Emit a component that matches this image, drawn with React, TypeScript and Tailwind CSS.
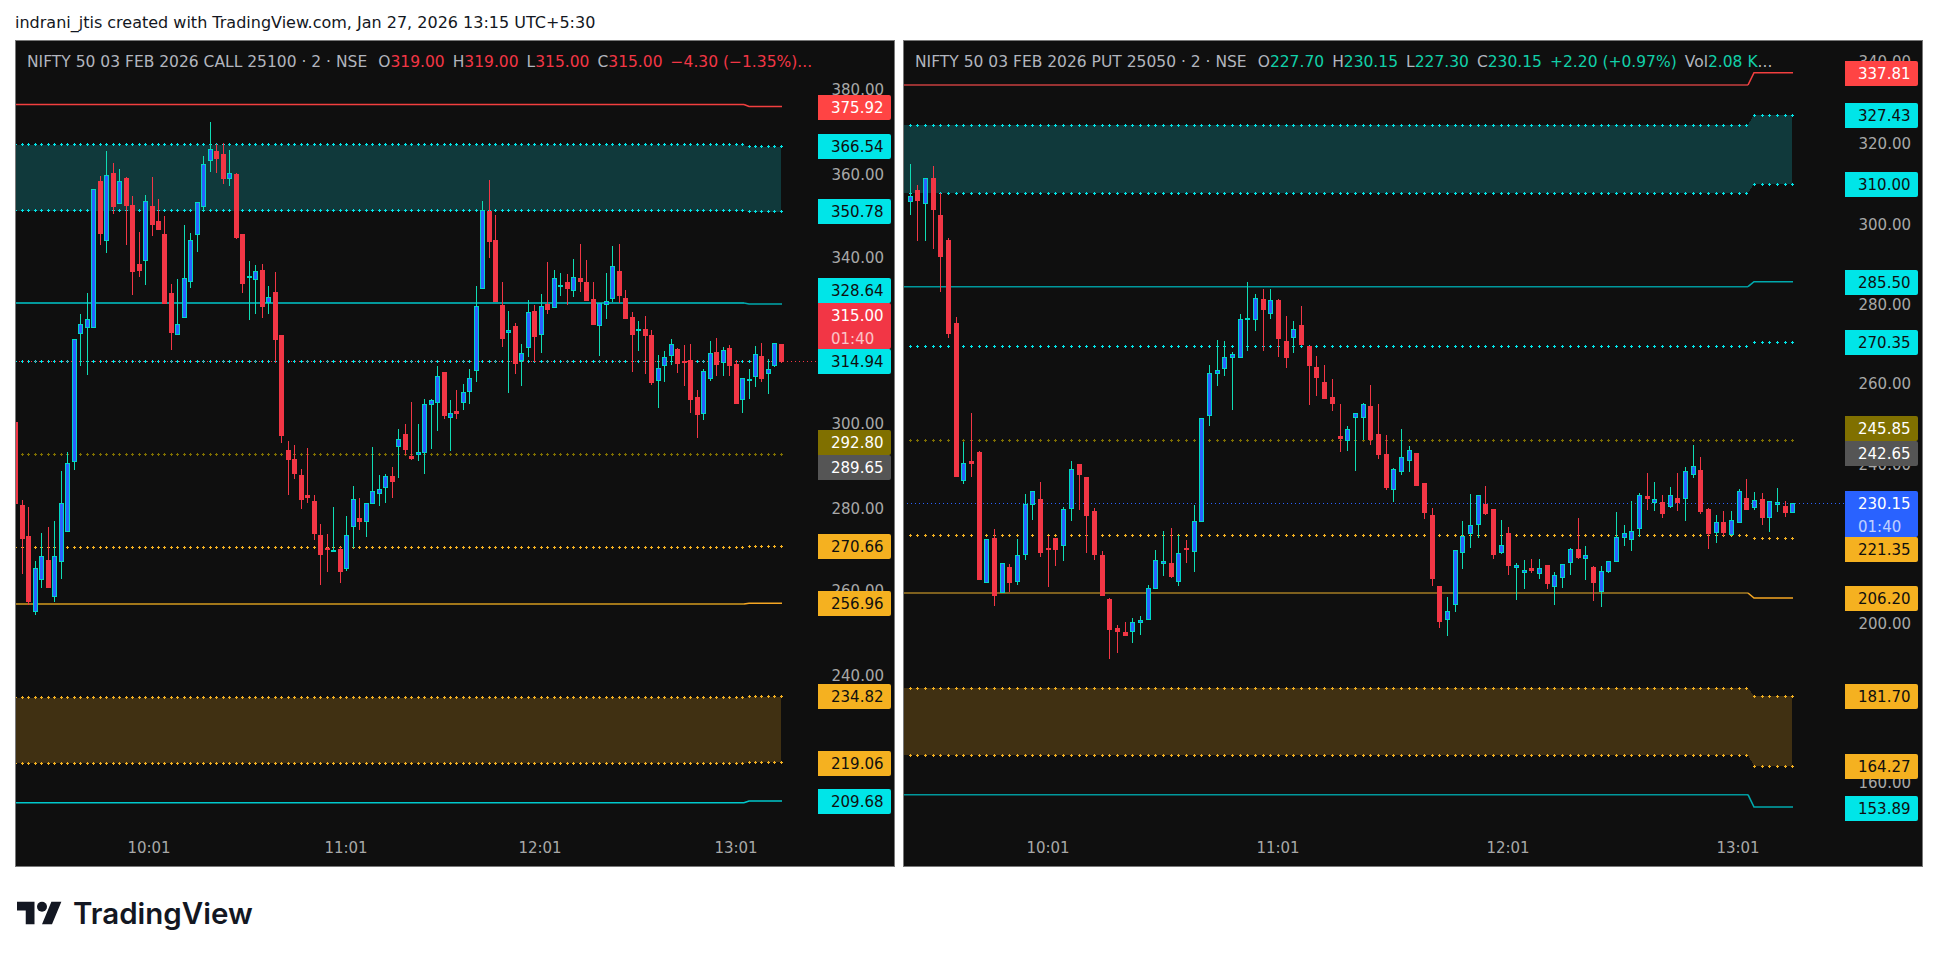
import React from "react";

type Row = [number, number, number, number, number, number];
type Candle = { x: number; hi: number; lo: number; top: number; bot: number; up: boolean };

// readings are x, high, low, body top, body bottom, up in a 3x crop
const fromCrop = (ox: number, oy: number, rows: Row[]): Candle[] =>
  rows.map(([x, hi, lo, top, bot, up]) => ({
    x: Math.floor(ox + x / 3),
    hi: Math.round(oy + hi / 3),
    lo: Math.round(oy + lo / 3),
    top: Math.round(oy + top / 3),
    bot: Math.round(oy + bot / 3),
    up: up === 1,
  }));

const callCandles = [
  ...fromCrop(15, 115, [
    [2, 872, 1166, 920, 1166, 0], [22, 1155, 1377, 1170, 1271, 0], [40, 1176, 1470, 1263, 1461, 0],
    [61, 1338, 1500, 1360, 1490, 1], [79, 1254, 1418, 1324, 1396, 1], [100, 1236, 1418, 1335, 1418, 0],
    [118, 1218, 1460, 1324, 1445, 1], [139, 1068, 1392, 1165, 1342, 1], [157, 1010, 1252, 1045, 1252, 1],
    [178, 673, 1064, 673, 1042, 1], [196, 597, 752, 628, 658, 1], [217, 534, 780, 613, 640, 1],
    [235, 223, 640, 223, 640, 1], [256, 182, 389, 198, 356, 0], [274, 108, 413, 181, 379, 1],
    [295, 144, 296, 175, 275, 0], [313, 162, 266, 199, 266, 1], [334, 186, 389, 190, 272, 0],
    [352, 243, 539, 270, 470, 0], [373, 350, 485, 447, 467, 0], [391, 239, 509, 259, 439, 1],
    [412, 186, 362, 273, 329, 0], [430, 252, 344, 318, 344, 0], [448, 303, 566, 357, 566, 0],
    [469, 507, 704, 534, 653, 0], [487, 492, 661, 628, 661, 1], [508, 330, 610, 490, 610, 1],
    [526, 354, 518, 376, 502, 1], [547, 262, 410, 262, 361, 1], [565, 123, 288, 148, 277, 1],
    [586, 21, 170, 103, 139, 1], [604, 87, 173, 108, 131, 0], [625, 84, 207, 117, 191, 0],
    [643, 105, 212, 175, 193, 1], [664, 174, 372, 177, 368, 0], [682, 357, 533, 357, 506, 0],
    [703, 438, 614, 484, 488, 1], [721, 450, 596, 469, 496, 1], [742, 447, 608, 465, 575, 0],
    [760, 513, 596, 547, 564, 1], [781, 471, 744, 531, 674, 0],
  ]),
  ...fromCrop(275, 115, [
    [19, 660, 983, 660, 962, 0], [40, 978, 1139, 1005, 1034, 0], [58, 990, 1091, 1032, 1076, 0],
    [79, 1062, 1181, 1080, 1154, 0], [97, 999, 1163, 1140, 1148, 0], [118, 1140, 1274, 1158, 1256, 0],
    [136, 1227, 1409, 1260, 1319, 0], [157, 1257, 1370, 1298, 1301, 0], [175, 1176, 1312, 1306, 1312, 1],
    [196, 1295, 1403, 1302, 1370, 0], [214, 1203, 1367, 1261, 1361, 1], [235, 1113, 1298, 1153, 1235, 1],
    [253, 1149, 1244, 1209, 1220, 0], [274, 1165, 1265, 1165, 1222, 1], [292, 996, 1166, 1129, 1166, 1],
    [313, 1080, 1172, 1123, 1136, 1], [331, 1077, 1163, 1084, 1120, 1], [352, 1056, 1148, 1083, 1100, 0],
    [370, 942, 1088, 973, 997, 1], [391, 927, 1020, 957, 1004, 0], [409, 861, 1034, 1023, 1031, 0],
    [430, 927, 1037, 1012, 1021, 1], [448, 852, 1076, 868, 1013, 1], [469, 852, 1001, 856, 871, 1],
    [487, 753, 947, 784, 865, 1], [508, 771, 911, 771, 902, 0], [526, 855, 1007, 895, 910, 1],
    [544, 825, 911, 888, 897, 0], [565, 807, 884, 832, 865, 1], [583, 762, 866, 790, 832, 1],
    [604, 513, 800, 574, 769, 1], [622, 258, 523, 286, 523, 1], [643, 195, 428, 288, 380, 0],
    [661, 300, 562, 375, 562, 0], [682, 501, 695, 570, 671, 0], [700, 588, 833, 646, 655, 1],
    [721, 624, 776, 633, 746, 0], [739, 687, 812, 715, 739, 1], [760, 555, 725, 592, 700, 1],
    [778, 570, 742, 588, 665, 0],
  ]),
  ...fromCrop(535, 150, [
    [19, 432, 608, 468, 556, 1], [37, 336, 491, 462, 479, 0], [58, 360, 475, 385, 475, 1],
    [76, 369, 438, 405, 412, 1], [97, 372, 465, 396, 416, 0], [115, 327, 441, 382, 422, 1],
    [136, 282, 426, 384, 395, 0], [154, 330, 452, 396, 452, 0], [175, 396, 524, 447, 524, 0],
    [193, 460, 618, 460, 529, 1], [214, 369, 507, 454, 466, 1], [232, 288, 456, 349, 448, 1],
    [253, 282, 459, 363, 437, 0], [271, 420, 506, 444, 506, 0], [292, 486, 666, 501, 554, 0],
    [310, 513, 603, 538, 544, 1], [331, 498, 672, 537, 557, 0], [349, 540, 705, 555, 698, 0],
    [370, 615, 774, 655, 694, 1], [388, 603, 696, 622, 649, 1], [409, 567, 645, 583, 617, 1],
    [427, 594, 669, 597, 641, 0], [448, 585, 708, 633, 637, 0], [466, 582, 789, 630, 749, 0],
    [487, 720, 864, 741, 794, 0], [505, 657, 810, 664, 791, 1], [526, 573, 693, 610, 686, 1],
    [544, 564, 678, 606, 644, 0], [565, 591, 678, 601, 640, 1], [583, 585, 678, 594, 647, 0],
    [604, 630, 761, 642, 761, 0], [622, 685, 789, 685, 751, 1], [643, 657, 747, 687, 690, 1],
    [661, 588, 711, 613, 680, 1], [679, 579, 696, 618, 686, 0], [700, 627, 732, 658, 671, 1],
    [718, 580, 651, 580, 647, 1], [739, 582, 640, 582, 635, 0],
  ]),
];

const putCandles = [
  ...fromCrop(905, 160, [
    [16, 12, 164, 109, 125, 1], [37, 75, 243, 90, 122, 0], [61, 55, 243, 55, 133, 1],
    [85, 18, 267, 54, 149, 0], [106, 100, 395, 165, 290, 0], [130, 234, 533, 240, 521, 0],
    [154, 471, 950, 489, 950, 0], [175, 845, 971, 910, 964, 1], [199, 759, 950, 903, 911, 0],
    [223, 873, 1259, 876, 1259, 0], [244, 1138, 1270, 1138, 1270, 1], [268, 1107, 1337, 1134, 1307, 0],
    [292, 1210, 1300, 1210, 1300, 1], [313, 1212, 1295, 1221, 1268, 0], [337, 1137, 1274, 1186, 1265, 1],
    [361, 1002, 1199, 1032, 1186, 1], [382, 994, 1079, 994, 1036, 1], [406, 966, 1190, 1017, 1178, 0],
    [430, 1127, 1280, 1164, 1169, 0], [451, 1134, 1217, 1134, 1169, 0], [475, 1041, 1202, 1048, 1159, 1],
    [499, 903, 1082, 928, 1048, 1], [523, 912, 1049, 912, 944, 0], [544, 951, 1178, 951, 1067, 0],
    [568, 1044, 1199, 1053, 1184, 0], [592, 1173, 1307, 1185, 1307, 0], [613, 1314, 1496, 1317, 1409, 0],
    [637, 1395, 1478, 1404, 1415, 0], [661, 1386, 1427, 1416, 1427, 0], [682, 1374, 1448, 1387, 1415, 1],
    [706, 1368, 1424, 1381, 1388, 1], [730, 1275, 1379, 1285, 1379, 1], [751, 1170, 1288, 1201, 1288, 1],
    [775, 1113, 1247, 1204, 1213, 1], [799, 1104, 1254, 1209, 1251, 0], [820, 1125, 1277, 1180, 1267, 1],
    [844, 1140, 1208, 1164, 1167, 0], [868, 1035, 1235, 1084, 1175, 1], [889, 775, 1087, 775, 1087, 1],
  ]),
  ...fromCrop(1200, 270, [
    [28, 285, 467, 310, 437, 1], [52, 210, 347, 301, 311, 1], [73, 213, 317, 262, 296, 1],
    [97, 246, 419, 253, 263, 1], [121, 133, 265, 148, 265, 1], [142, 36, 242, 145, 149, 1],
    [166, 72, 182, 85, 149, 1], [190, 57, 242, 87, 119, 0], [211, 57, 146, 91, 131, 1],
    [235, 87, 260, 90, 206, 0], [259, 138, 293, 213, 263, 0], [280, 153, 248, 178, 203, 1],
    [304, 108, 224, 165, 224, 0], [328, 228, 404, 228, 287, 0], [349, 258, 377, 291, 323, 0],
    [373, 285, 386, 336, 386, 0], [397, 327, 422, 381, 401, 0], [421, 402, 545, 498, 507, 0],
    [442, 468, 542, 478, 512, 1], [466, 430, 602, 430, 445, 1], [490, 399, 510, 403, 443, 1],
    [511, 345, 524, 408, 509, 0], [535, 402, 566, 492, 554, 0], [559, 495, 659, 552, 653, 0],
    [580, 594, 695, 598, 659, 1], [604, 477, 614, 562, 605, 1], [628, 528, 605, 541, 572, 1],
    [649, 549, 647, 549, 647, 0], [673, 639, 746, 639, 728, 0], [697, 714, 947, 735, 926, 0],
    [718, 948, 1073, 948, 1055, 0], [742, 981, 1097, 1024, 1051, 1], [766, 841, 1025, 841, 1006, 1],
    [787, 753, 896, 799, 850, 1], [811, 672, 833, 766, 791, 1], [835, 676, 803, 676, 766, 1],
    [856, 648, 735, 702, 731, 0], [880, 717, 866, 717, 854, 0],
  ]),
  ...fromCrop(1500, 430, [
    [4, 270, 371, 346, 368, 1], [25, 291, 434, 309, 407, 0], [49, 400, 510, 406, 415, 1],
    [73, 390, 476, 421, 430, 1], [94, 387, 428, 415, 422, 0], [118, 387, 446, 415, 433, 1],
    [142, 405, 476, 405, 461, 0], [163, 426, 525, 436, 470, 1], [187, 403, 473, 403, 443, 1],
    [211, 354, 434, 358, 398, 1], [235, 264, 387, 357, 384, 0], [256, 348, 449, 376, 388, 1],
    [280, 408, 513, 411, 458, 0], [304, 408, 530, 424, 485, 1], [325, 394, 428, 394, 425, 1],
    [349, 246, 395, 322, 395, 1], [373, 285, 348, 310, 323, 1], [394, 213, 362, 304, 329, 1],
    [418, 189, 320, 196, 296, 1], [442, 129, 240, 198, 207, 0], [463, 156, 243, 208, 218, 1],
    [487, 195, 264, 216, 251, 0], [511, 171, 234, 196, 230, 1], [532, 129, 243, 204, 219, 0],
    [556, 111, 273, 124, 208, 1], [580, 45, 144, 109, 134, 1], [601, 81, 252, 120, 245, 0],
    [625, 234, 357, 237, 311, 0], [649, 255, 339, 277, 308, 1], [670, 243, 318, 276, 308, 0],
    [694, 243, 318, 271, 314, 1], [718, 177, 280, 184, 280, 1], [739, 147, 239, 204, 239, 0],
    [763, 186, 240, 211, 233, 1], [787, 189, 285, 207, 263, 0], [808, 214, 306, 214, 263, 1],
    [832, 174, 246, 217, 224, 1], [856, 213, 261, 228, 248, 0], [877, 220, 250, 220, 250, 1],
  ]),
];

const CYAN = "#00e5e8";
const AMBER = "#f5b120";
const TEAL_FILL = "#10393b";
const AMBER_FILL = "#403012";

const cyanTag = "bg-[#00e5e8] text-[#0f0f0f]";
const amberTag = "bg-[#f5b120] text-[#0f0f0f]";
const redTag = "bg-[#ff4444] text-white";
const oliveTag = "bg-[#807000] text-white";
const greyTag = "bg-[#555555] text-white";

type Dotted = { y1: number; y2: number; color: string };
type Solid = { y1: number; y2: number; before: string; after: string };
type Band = { y1: number; y2: number; y3: number; y4: number; fill: string };
type Tag = { pos: string; text: string; tone: string; timer?: string };

type ChartSpec = {
  x0: number;
  width: number;
  box: string;
  column: string;
  stepA: number;
  stepB: number;
  end: number;
  labelX: number;
  candles: Candle[];
  priceLine: { y: number; color: string };
  bands: Band[];
  dotted: Dotted[];
  solids: Solid[];
  axis: [string, string][];
  tags: Tag[];
  times: [string, string][];
  legend: React.ReactNode;
};

const Legend = ({ title, ohlc, change, tone, extra }: {
  title: string;
  ohlc: [string, string][];
  change: string;
  tone: string;
  extra?: React.ReactNode;
}) => (
  <div className="absolute left-[12px] top-[11px] flex items-center gap-[8px] h-[24px] text-[15.5px] text-[#b2b5be] whitespace-nowrap">
    <span className="mr-[3px]">{title}</span>
    {ohlc.map(([k, v]) => (
      <span key={k}>
        {k}
        <span className={tone}>{v}</span>
      </span>
    ))}
    <span className={tone}>{change}</span>
    {extra}
  </div>
);

const left: ChartSpec = {
  x0: 15,
  width: 880,
  box: "w-[880px]",
  column: "left-[803px]",
  stepA: 744,
  stepB: 749,
  end: 782,
  labelX: 818,
  candles: callCandles,
  priceLine: { y: 361.5, color: "#f23645" },
  bands: [
    { y1: 145, y2: 147, y3: 212, y4: 211, fill: TEAL_FILL },
    { y1: 698, y2: 697, y3: 762, y4: 763, fill: AMBER_FILL },
  ],
  dotted: [
    { y1: 144, y2: 146, color: CYAN },
    { y1: 210, y2: 211, color: CYAN },
    { y1: 361, y2: 361, color: CYAN },
    { y1: 454, y2: 454, color: "#807000" },
    { y1: 547, y2: 546, color: AMBER },
    { y1: 697, y2: 696, color: AMBER },
    { y1: 763, y2: 762, color: AMBER },
  ],
  solids: [
    { y1: 104.5, y2: 106.5, before: "#f23f3f", after: "#f23f3f" },
    { y1: 303, y2: 304, before: "#00c8cc", after: "#00a9ad" },
    { y1: 604, y2: 603.3, before: "#d49b1f", after: "#f5a623" },
    { y1: 802.7, y2: 801, before: "#00c8cc", after: "#00c8cc" },
  ],
  axis: [
    ["top-[38px]", "380.00"], ["top-[123px]", "360.00"], ["top-[206px]", "340.00"], ["top-[372px]", "300.00"],
    ["top-[457px]", "280.00"], ["top-[539px]", "260.00"], ["top-[624px]", "240.00"],
  ],
  tags: [
    { pos: "top-[55px]", text: "375.92", tone: redTag },
    { pos: "top-[94px]", text: "366.54", tone: cyanTag },
    { pos: "top-[159px]", text: "350.78", tone: cyanTag },
    { pos: "top-[238px]", text: "328.64", tone: cyanTag },
    { pos: "top-[263px]", text: "315.00", timer: "01:40", tone: "bg-[#f23645] text-white" },
    { pos: "top-[309px]", text: "314.94", tone: cyanTag },
    { pos: "top-[390px]", text: "292.80", tone: oliveTag },
    { pos: "top-[415px]", text: "289.65", tone: greyTag },
    { pos: "top-[494px]", text: "270.66", tone: amberTag },
    { pos: "top-[551px]", text: "256.96", tone: amberTag },
    { pos: "top-[644px]", text: "234.82", tone: amberTag },
    { pos: "top-[711px]", text: "219.06", tone: amberTag },
    { pos: "top-[749px]", text: "209.68", tone: cyanTag },
  ],
  times: [["left-[134px]", "10:01"], ["left-[331px]", "11:01"], ["left-[525px]", "12:01"], ["left-[721px]", "13:01"]],
  legend: (
    <Legend
      title="NIFTY 50 03 FEB 2026 CALL 25100 · 2 · NSE"
      ohlc={[["O", "319.00"], ["H", "319.00"], ["L", "315.00"], ["C", "315.00"]]}
      change="−4.30 (−1.35%)..."
      tone="text-[#f23645]"
    />
  ),
};

const right: ChartSpec = {
  x0: 903,
  width: 1020,
  box: "w-[1020px]",
  column: "left-[942px]",
  stepA: 1748,
  stepB: 1754,
  end: 1793,
  labelX: 1845,
  candles: putCandles,
  priceLine: { y: 503.5, color: "#2962ff" },
  bands: [
    { y1: 125, y2: 115, y3: 184, y4: 193, fill: TEAL_FILL },
    { y1: 688, y2: 696, y3: 766, y4: 755, fill: AMBER_FILL },
  ],
  dotted: [
    { y1: 125, y2: 115, color: CYAN },
    { y1: 193, y2: 184, color: CYAN },
    { y1: 346, y2: 342, color: CYAN },
    { y1: 440, y2: 440, color: "#807000" },
    { y1: 535, y2: 538, color: AMBER },
    { y1: 688, y2: 696, color: AMBER },
    { y1: 755, y2: 766, color: AMBER },
  ],
  solids: [
    { y1: 85, y2: 72.7, before: "#c93f3f", after: "#f23f3f" },
    { y1: 286.7, y2: 281.7, before: "#00989c", after: "#00a9ad" },
    { y1: 593, y2: 598, before: "#a47c25", after: "#f5a623" },
    { y1: 794.7, y2: 807, before: "#00989c", after: "#00a9ad" },
  ],
  axis: [
    ["top-[10px]", "340.00"], ["top-[92px]", "320.00"], ["top-[173px]", "300.00"], ["top-[253px]", "280.00"],
    ["top-[332px]", "260.00"], ["top-[413px]", "240.00"], ["top-[572px]", "200.00"], ["top-[731px]", "160.00"],
  ],
  tags: [
    { pos: "top-[21px]", text: "337.81", tone: redTag },
    { pos: "top-[63px]", text: "327.43", tone: cyanTag },
    { pos: "top-[132px]", text: "310.00", tone: cyanTag },
    { pos: "top-[230px]", text: "285.50", tone: cyanTag },
    { pos: "top-[290px]", text: "270.35", tone: cyanTag },
    { pos: "top-[376px]", text: "245.85", tone: oliveTag },
    { pos: "top-[401px]", text: "242.65", tone: greyTag },
    { pos: "top-[451px]", text: "230.15", timer: "01:40", tone: "bg-[#2962ff] text-white" },
    { pos: "top-[497px]", text: "221.35", tone: amberTag },
    { pos: "top-[546px]", text: "206.20", tone: amberTag },
    { pos: "top-[644px]", text: "181.70", tone: amberTag },
    { pos: "top-[714px]", text: "164.27", tone: amberTag },
    { pos: "top-[756px]", text: "153.89", tone: cyanTag },
  ],
  times: [["left-[145px]", "10:01"], ["left-[375px]", "11:01"], ["left-[605px]", "12:01"], ["left-[835px]", "13:01"]],
  legend: (
    <Legend
      title="NIFTY 50 03 FEB 2026 PUT 25050 · 2 · NSE"
      ohlc={[["O", "227.70"], ["H", "230.15"], ["L", "227.30"], ["C", "230.15"]]}
      change="+2.20 (+0.97%)"
      tone="text-[#12cfa9]"
      extra={
        <span>
          Vol<span className="text-[#12cfa9]">2.08 K</span>...
        </span>
      }
    />
  ),
};

function Chart({ spec }: { spec: ChartSpec }) {
  const { x0, width, stepA, stepB, end, candles } = spec;
  const plus = (x: number, y: number) => `M${x - 1} ${y}h3v1h-3zM${x} ${y - 1}h1v3h-1z`;
  return (
    <div className={`relative h-[827px] bg-[#0f0f0f] overflow-hidden shrink-0 ${spec.box}`}>
      <svg
        className="absolute left-0 top-0"
        width={width}
        height={827}
        viewBox={`${x0} 40 ${width} 827`}
        shapeRendering="crispEdges"
      >
        {spec.bands.map((b, i) => (
          <polygon
            key={i}
            fill={b.fill}
            points={`${x0},${b.y1} ${stepA},${b.y1} ${stepB},${b.y2} ${end - 1},${b.y2} ${end - 1},${b.y3} ${stepB},${b.y3} ${stepA},${b.y4} ${x0},${b.y4}`}
          />
        ))}
        {spec.dotted.map((d, i) => (
          <path key={i} fill={d.color} d={candles.map((c) => plus(c.x, c.x >= stepB - 1 ? d.y2 : d.y1)).join("")} />
        ))}
        {spec.solids.map((s, i) => (
          <g key={i} fill="none" strokeWidth={1.6} shapeRendering="auto">
            <polyline stroke={s.before} points={`${x0},${s.y1} ${stepA},${s.y1}`} />
            <polyline stroke={s.after} points={`${stepA},${s.y1} ${stepB},${s.y2} ${end},${s.y2}`} />
          </g>
        ))}
        <line
          x1={x0}
          x2={spec.labelX}
          y1={spec.priceLine.y}
          y2={spec.priceLine.y}
          stroke={spec.priceLine.color}
          strokeDasharray="1 3"
        />
        {candles.map((c, i) => (
          <g key={i}>
            <rect x={c.x} y={c.hi} width={1} height={Math.max(c.lo - c.hi, 1)} fill={c.up ? "#0fdcb4" : "#f23645"} />
            <rect x={c.x - 2} y={c.top} width={5} height={Math.max(c.bot - c.top, 2)} fill={c.up ? "#00d8c4" : "#f23645"} />
            {c.up && c.bot - c.top > 2 && (
              <rect x={c.x - 1} y={c.top + 1} width={3} height={c.bot - c.top - 2} fill="#2962ff" />
            )}
          </g>
        ))}
      </svg>

      {spec.legend}

      <div className={`absolute top-0 w-[73px] h-full text-[15px] ${spec.column}`}>
        {spec.axis.map(([pos, t]) => (
          <div key={t} className={`absolute right-[7px] h-[24px] leading-[24px] text-[#a8a8a8] ${pos}`}>
            {t}
          </div>
        ))}
        {spec.tags.map((t) => (
          <div
            key={t.text}
            className={`absolute left-0 w-[73px] pl-[13px] pt-[2px] rounded-r-[2px] leading-[23px] ${t.timer ? "h-[46px]" : "h-[25px]"} ${t.pos} ${t.tone}`}
          >
            <div>{t.text}</div>
            {t.timer && <div className="opacity-70">{t.timer}</div>}
          </div>
        ))}
      </div>

      {spec.times.map(([pos, t]) => (
        <div key={t} className={`absolute top-[796px] h-[24px] leading-[24px] w-[60px] text-center text-[15px] text-[#a8a8a8] ${pos} -translate-x-[30px]`}>
          {t}
        </div>
      ))}

      <div className="absolute inset-0 border border-[#787878] pointer-events-none" />
    </div>
  );
}

export default function App() {
  return (
    <div className="w-[1938px] h-[955px] bg-white overflow-hidden [font-family:'DejaVu_Sans',sans-serif]">
      <div className="h-[40px] pl-[15px] pt-[12px] text-[16px] leading-[22px] text-[#131722] whitespace-nowrap">
        indrani_jtis created with TradingView.com, Jan 27, 2026 13:15 UTC+5:30
      </div>
      <div className="flex gap-[8px] pl-[15px]">
        <Chart spec={left} />
        <Chart spec={right} />
      </div>
      <div className="flex items-center gap-[11px] pl-[17px] mt-[28px] text-[#131722]">
        <svg width="45" height="28" viewBox="0 2 36 22" fill="currentColor">
          <path d="M14 22H7V11H0V4h14v18zM28 22h-8l7.5-18h8L28 22z" />
          <circle cx="20" cy="8" r="4" />
        </svg>
        <span className="text-[29.5px] leading-[36px] font-semibold [font-family:Inter,sans-serif]">TradingView</span>
      </div>
    </div>
  );
}
